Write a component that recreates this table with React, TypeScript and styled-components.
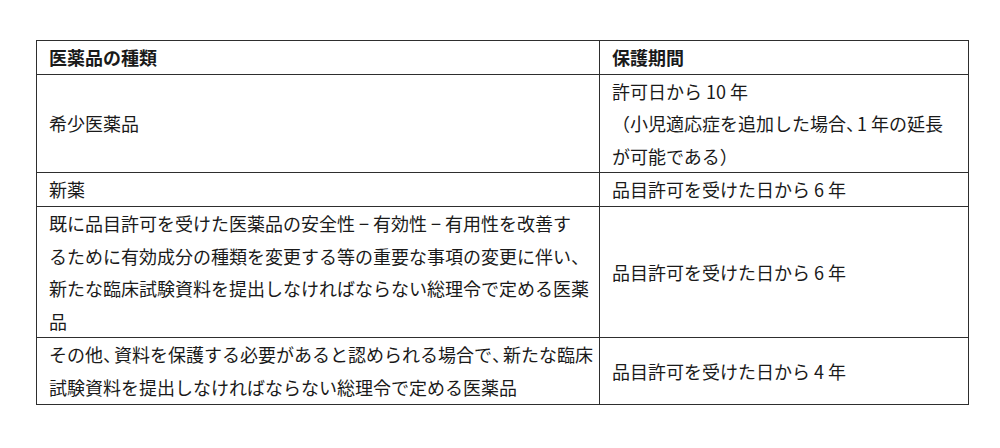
import * as React from "react";
import styled, { createGlobalStyle } from "styled-components";

const GlobalStyle = createGlobalStyle`
  body {
    margin: 0;
    background: #ffffff;
  }
`;

const Page = styled.div`
  width: 1000px;
  height: 448px;
  padding: 40px 0 0 36px;
  box-sizing: border-box;
  background: #ffffff;
`;

const Table = styled.table`
  border-collapse: collapse;
  width: 933px;
  table-layout: fixed;
  font-family: "Noto Sans CJK JP", "Noto Sans", sans-serif;
  font-size: 18px;
  line-height: 32.6px;
  color: #1a1a1a;
`;

const Cell = styled.td<{ $head?: boolean; $wide?: boolean }>`
  box-sizing: border-box;
  border: 1px solid #2e2e2e;
  padding: 0 0 0 12px;
  vertical-align: middle;
  white-space: nowrap;
  font-weight: ${(p) => (p.$head ? 700 : 400)};
  width: ${(p) => (p.$wide ? "563px" : "auto")};
`;

const Line = styled.div`
  white-space: nowrap;
`;

const Dash = styled.span`
  padding: 0 4px;
`;

const Comma = styled.span`
  letter-spacing: -7px;
`;

// Japanese comma set narrow, as in the source document
const text = (s: string): React.ReactNode =>
  s.split("、").map((part, i, all) => (
    <React.Fragment key={i}>
      {part}
      {i < all.length - 1 && <Comma>、</Comma>}
    </React.Fragment>
  ));

interface IRow {
  kind: React.ReactNode[];
  term: string[];
}

const rows: IRow[] = [
  {
    kind: ["希少医薬品"],
    term: ["許可日から 10 年", "（小児適応症を追加した場合、1 年の延長", "が可能である）"],
  },
  { kind: ["新薬"], term: ["品目許可を受けた日から 6 年"] },
  {
    kind: [
      <>
        既に品目許可を受けた医薬品の安全性<Dash>−</Dash>有効性<Dash>−</Dash>有用性を改善す
      </>,
      "るために有効成分の種類を変更する等の重要な事項の変更に伴い、",
      "新たな臨床試験資料を提出しなければならない総理令で定める医薬",
      "品",
    ],
    term: ["品目許可を受けた日から 6 年"],
  },
  {
    kind: [
      "その他、資料を保護する必要があると認められる場合で、新たな臨床",
      "試験資料を提出しなければならない総理令で定める医薬品",
    ],
    term: ["品目許可を受けた日から 4 年"],
  },
];

const App: React.FC = () => {
  return (
    <Page>
      <GlobalStyle />
      <Table>
        <tbody>
          <tr>
            <Cell $head $wide>医薬品の種類</Cell>
            <Cell $head>保護期間</Cell>
          </tr>
          {rows.map((row, i) => (
            <tr key={i}>
              <Cell $wide>
                {row.kind.map((t, j) => (
                  <Line key={j}>{typeof t === "string" ? text(t) : t}</Line>
                ))}
              </Cell>
              <Cell>
                {row.term.map((t, j) => (
                  <Line key={j}>{text(t)}</Line>
                ))}
              </Cell>
            </tr>
          ))}
        </tbody>
      </Table>
    </Page>
  );
};

export default App;
